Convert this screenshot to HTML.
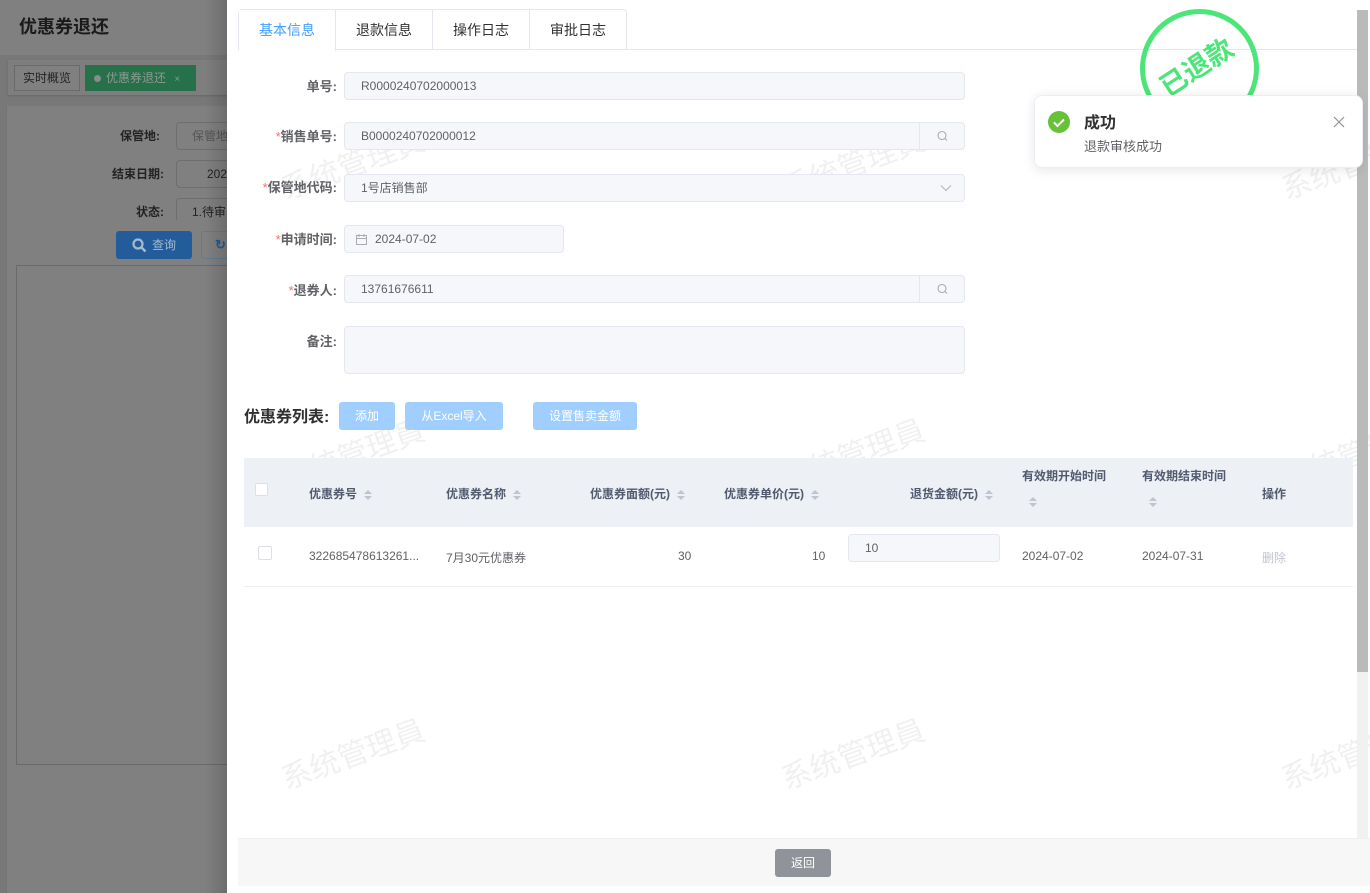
<!DOCTYPE html>
<html><head><meta charset="utf-8"><style>
*{box-sizing:border-box;margin:0;padding:0}
body{width:1370px;height:893px;overflow:hidden;position:relative;background:#787878;font-family:"Liberation Sans","Noto Sans CJK SC",sans-serif;font-size:13px;color:#606266}
.a{position:absolute}
.lbl{position:absolute;width:110px;text-align:right;font-weight:bold;color:#606266;font-size:13px}
.lbl i{color:#f56c6c;font-style:normal;font-weight:normal}
.inp{position:absolute;background:#f5f7fa;border:1px solid #e4e7ed;border-radius:4px;color:#606266;font-size:12px;padding-left:16px;line-height:26px;height:28px}
.sbtn{position:absolute;right:0;top:0;width:45px;height:26px;border-left:1px solid #e4e7ed}
.btn{position:absolute;background:#a0cfff;color:#fff;border-radius:3px;font-size:12px;text-align:center;line-height:28px;height:28px}
.th{position:absolute;font-weight:bold;color:#515a6e;font-size:12px}
.sort{display:inline-block;width:10px;height:12px;vertical-align:middle;margin-left:6px}
.td{position:absolute;font-size:12px;color:#606266}
.wm{position:absolute;color:rgba(0,0,0,0.06);font-size:30px;transform:rotate(-20deg);white-space:nowrap}
</style></head><body>
<div class="a" style="left:0;top:0;width:227px;height:55px;background:#808080"></div>
<div class="a" style="left:19px;top:13px;font-size:18px;font-weight:bold;color:#1a1a1a">优惠券退还</div>
<div class="a" style="left:8px;top:60px;width:219px;height:35px;background:#7e7e7e;box-shadow:0 1px 2px rgba(0,0,0,.15)"></div>
<div class="a" style="left:14px;top:65px;width:66px;height:26px;border:1px solid #6a6a6a;background:#808080;color:#222;font-size:12px;line-height:24px;text-align:center">实时概览</div>
<div class="a" style="left:85px;top:65px;width:111px;height:26px;background:#26704a;color:#8c9a92;font-size:12px;line-height:26px;padding-left:9px"><span style="display:inline-block;width:7px;height:7px;border-radius:50%;background:#8a8a8a;margin-right:5px"></span>优惠券退还 <span style="margin-left:5px;font-size:10px">×</span></div>
<div class="a" style="left:6px;top:106px;width:221px;height:787px;background:#808080;border-left:1px solid #747474"></div>
<div class="a" style="left:120px;top:127px;font-weight:bold;color:#222;font-size:12px">保管地:</div>
<div class="a" style="left:176px;top:122px;width:60px;height:28px;border:1px solid #6e6e6e;border-radius:4px;color:#555;font-size:12px;line-height:26px;padding-left:15px">保管地</div>
<div class="a" style="left:112px;top:165px;font-weight:bold;color:#222;font-size:12px">结束日期:</div>
<div class="a" style="left:176px;top:160px;width:60px;height:28px;border:1px solid #6e6e6e;border-radius:4px;color:#222;font-size:12px;line-height:26px;padding-left:30px">202</div>
<div class="a" style="left:136px;top:203px;font-weight:bold;color:#222;font-size:12px">状态:</div>
<div class="a" style="left:176px;top:198px;width:60px;height:22px;border:1px solid #6e6e6e;border-bottom:none;border-radius:4px 4px 0 0;color:#222;font-size:12px;line-height:26px;padding-left:15px">1.待审</div>
<div class="a" style="left:116px;top:231px;width:76px;height:28px;background:#225c9a;border-radius:3px;color:#a9b9cc;font-size:12px;line-height:28px;padding-left:36px"><svg class="a" style="left:16px;top:7px" width="15" height="15"><circle cx="6" cy="6" r="4.5" fill="none" stroke="#a9b9cc" stroke-width="2.2"/><path d="M9.5 9.5l4 4" stroke="#a9b9cc" stroke-width="2.5"/></svg>查询</div>
<div class="a" style="left:201px;top:231px;width:30px;height:28px;border:1px solid #5f7b9a;border-radius:3px;color:#1f5a99;font-weight:bold;padding-left:13px;line-height:26px">↻</div>
<div class="a" style="left:16px;top:265px;width:215px;height:500px;border:1px solid #6a6a6a"></div>
<div class="a" style="left:205px;top:0;width:22px;height:893px;background:linear-gradient(to right,rgba(0,0,0,0),rgba(0,0,0,.15))"></div>

<div class="a" style="left:227px;top:0;width:1143px;height:893px;background:#fff">
 <div class="wm" style="left:50px;top:140px">系统管理員</div>
 <div class="wm" style="left:550px;top:140px">系统管理員</div>
 <div class="wm" style="left:1050px;top:140px">系统管理員</div>
 <div class="wm" style="left:50px;top:430px">系统管理員</div>
 <div class="wm" style="left:550px;top:430px">系统管理員</div>
 <div class="wm" style="left:1050px;top:430px">系统管理員</div>
 <div class="wm" style="left:50px;top:730px">系统管理員</div>
 <div class="wm" style="left:550px;top:730px">系统管理員</div>
 <div class="wm" style="left:1050px;top:730px">系统管理員</div>
 <div class="a" style="left:11px;top:49px;width:1120px;height:1px;background:#e4e7ed"></div>
 <div class="a" style="left:11px;top:9px;width:389px;height:41px;border:1px solid #e4e7ed;border-bottom:none;border-radius:4px 4px 0 0;display:flex;font-size:14px">
  <div style="width:97px;text-align:center;line-height:40px;color:#409eff;background:#fff;border-right:1px solid #e4e7ed;height:41px">基本信息</div>
  <div style="width:97px;text-align:center;line-height:40px;color:#303133;border-right:1px solid #e4e7ed">退款信息</div>
  <div style="width:97px;text-align:center;line-height:40px;color:#303133;border-right:1px solid #e4e7ed">操作日志</div>
  <div style="width:96px;text-align:center;line-height:40px;color:#303133">审批日志</div>
 </div>
 <div class="a" style="left:913px;top:9px;width:119px;height:119px;border:5px solid #4ce57a;border-radius:50%"></div>
 <div class="a" style="left:928px;top:46px;font-size:27px;font-weight:bold;color:#4ce57a;transform:rotate(-33deg)">已退款</div>
 <div class="lbl" style="left:0;top:76px">单号:</div>
 <div class="inp" style="left:117px;top:72px;width:621px">R0000240702000013</div>
 <div class="lbl" style="left:0;top:126px"><i>*</i>销售单号:</div>
 <div class="inp" style="left:117px;top:122px;width:621px">B0000240702000012<div class="sbtn"><svg width="45" height="26"><circle cx="22" cy="12.5" r="4" fill="none" stroke="#a8abb2" stroke-width="1.1"/><path d="M25 15.5l2 2" stroke="#a8abb2" stroke-width="1.1"/></svg></div></div>
 <div class="lbl" style="left:0;top:177px"><i>*</i>保管地代码:</div>
 <div class="inp" style="left:117px;top:174px;width:621px">1号店销售部<svg class="a" style="right:12px;top:9px" width="12" height="8"><path d="M1 1.5l5 5 5-5" fill="none" stroke="#b0b3b8" stroke-width="1"/></svg></div>
 <div class="lbl" style="left:0;top:229px"><i>*</i>申请时间:</div>
 <div class="inp" style="left:117px;top:225px;width:220px;padding-left:30px"><svg class="a" style="left:11px;top:8px" width="11" height="11"><rect x="0.5" y="1.5" width="10" height="9" fill="none" stroke="#a8abb2"/><path d="M0.5 4.5h10M3 0v3M8 0v3" stroke="#a8abb2"/></svg>2024-07-02</div>
 <div class="lbl" style="left:0;top:280px"><i>*</i>退券人:</div>
 <div class="inp" style="left:117px;top:275px;width:621px">13761676611<div class="sbtn"><svg width="45" height="26"><circle cx="22" cy="12.5" r="4" fill="none" stroke="#a8abb2" stroke-width="1.1"/><path d="M25 15.5l2 2" stroke="#a8abb2" stroke-width="1.1"/></svg></div></div>
 <div class="lbl" style="left:0;top:331px">备注:</div>
 <div class="inp" style="left:117px;top:326px;width:621px;height:48px"></div>
 <div class="a" style="left:17px;top:403px;font-size:16px;font-weight:bold;color:#303133">优惠券列表:</div>
 <div class="btn" style="left:112px;top:402px;width:56px">添加</div>
 <div class="btn" style="left:178px;top:402px;width:98px">从Excel导入</div>
 <div class="btn" style="left:306px;top:402px;width:104px">设置售卖金额</div>
 <div class="a" style="left:17px;top:458px;width:1109px;height:69px;background:#edf0f5"></div>
 <div class="a" style="left:17px;top:586px;width:1109px;height:1px;background:#ebeef5"></div>
 <div class="a" style="left:28px;top:483px;width:13px;height:13px;background:#fff;border:1px solid #dcdfe6;border-radius:2px"></div>
 <div class="a" style="left:31px;top:546px;width:14px;height:14px;background:#fff;border:1px solid #dcdfe6;border-radius:2px"></div>
 <div class="th" style="left:82px;top:485px">优惠券号<svg class="sort" viewBox="0 0 10 12"><path d="M5 1l4 4H1zM5 11l4-4H1z" fill="#c0c4cc"/></svg></div>
 <div class="th" style="left:219px;top:485px">优惠券名称<svg class="sort" viewBox="0 0 10 12"><path d="M5 1l4 4H1zM5 11l4-4H1z" fill="#c0c4cc"/></svg></div>
 <div class="th" style="left:363px;top:485px">优惠券面额(元)<svg class="sort" viewBox="0 0 10 12"><path d="M5 1l4 4H1zM5 11l4-4H1z" fill="#c0c4cc"/></svg></div>
 <div class="th" style="left:497px;top:485px">优惠券单价(元)<svg class="sort" viewBox="0 0 10 12"><path d="M5 1l4 4H1zM5 11l4-4H1z" fill="#c0c4cc"/></svg></div>
 <div class="th" style="left:683px;top:485px">退货金额(元)<svg class="sort" viewBox="0 0 10 12"><path d="M5 1l4 4H1zM5 11l4-4H1z" fill="#c0c4cc"/></svg></div>
 <div class="th" style="left:795px;top:467px">有效期开始时间</div>
 <svg class="a" style="left:801px;top:496px" width="10" height="12" viewBox="0 0 10 12"><path d="M5 1l4 4H1zM5 11l4-4H1z" fill="#c0c4cc"/></svg>
 <div class="th" style="left:915px;top:467px">有效期结束时间</div>
 <svg class="a" style="left:921px;top:496px" width="10" height="12" viewBox="0 0 10 12"><path d="M5 1l4 4H1zM5 11l4-4H1z" fill="#c0c4cc"/></svg>
 <div class="th" style="left:1035px;top:485px">操作</div>
 <div class="td" style="left:82px;top:549px">322685478613261...</div>
 <div class="td" style="left:219px;top:549px">7月30元优惠券</div>
 <div class="td" style="left:451px;top:549px">30</div>
 <div class="td" style="left:585px;top:549px">10</div>
 <div class="inp" style="left:621px;top:534px;width:152px;height:28px;padding-left:16px">10</div>
 <div class="td" style="left:795px;top:549px">2024-07-02</div>
 <div class="td" style="left:915px;top:549px">2024-07-31</div>
 <div class="td" style="left:1035px;top:549px;color:#c0c4cc">删除</div>
 <div class="a" style="left:1130px;top:10px;width:11px;height:662px;background:#bababa"></div>
 <div class="a" style="left:1130px;top:672px;width:11px;height:166px;background:#f1f1f1"></div>
 <div class="a" style="left:11px;top:838px;width:1132px;height:48px;background:#f7f7f7;border-top:1px solid #eee"></div>
 <div class="a" style="left:548px;top:849px;width:56px;height:28px;background:#909399;border-radius:3px;color:#fff;font-size:12px;text-align:center;line-height:28px">返回</div>
</div>
<div class="a" style="left:1034px;top:95px;width:329px;height:73px;background:#fff;border:1px solid #ebeef5;border-radius:8px;box-shadow:0 2px 12px rgba(0,0,0,.1)">
 <svg class="a" style="left:13px;top:15px" width="22" height="22"><circle cx="11" cy="11" r="11" fill="#67c23a"/><path d="M6 11.5l3.5 3.5 6.5-6.5" fill="none" stroke="#fff" stroke-width="2"/></svg>
 <div class="a" style="left:49px;top:13px;font-size:16px;font-weight:bold;color:#303133">成功</div>
 <div class="a" style="left:49px;top:40px;font-size:13px;color:#606266">退款审核成功</div>
 <svg class="a" style="left:298px;top:20px" width="12" height="12"><path d="M1 1l10 10M11 1L1 11" stroke="#909399" stroke-width="1.2"/></svg>
</div>
</body></html>
